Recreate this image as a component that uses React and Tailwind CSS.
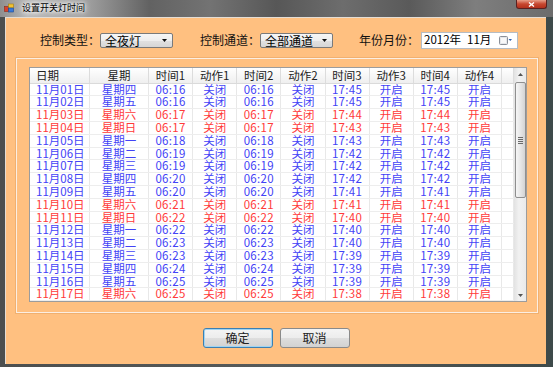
import React from "react";

const rows = [
  ["11月01日", "星期四", "06:16", "17:45", 0],
  ["11月02日", "星期五", "06:16", "17:45", 0],
  ["11月03日", "星期六", "06:17", "17:44", 1],
  ["11月04日", "星期日", "06:17", "17:43", 1],
  ["11月05日", "星期一", "06:18", "17:43", 0],
  ["11月06日", "星期二", "06:19", "17:42", 0],
  ["11月07日", "星期三", "06:19", "17:42", 0],
  ["11月08日", "星期四", "06:20", "17:42", 0],
  ["11月09日", "星期五", "06:20", "17:41", 0],
  ["11月10日", "星期六", "06:21", "17:41", 1],
  ["11月11日", "星期日", "06:22", "17:40", 1],
  ["11月12日", "星期一", "06:22", "17:40", 0],
  ["11月13日", "星期二", "06:23", "17:40", 0],
  ["11月14日", "星期三", "06:23", "17:39", 0],
  ["11月15日", "星期四", "06:24", "17:39", 0],
  ["11月16日", "星期五", "06:25", "17:39", 0],
  ["11月17日", "星期六", "06:25", "17:38", 1],
];

const headers = ["日期", "星期", "时间1", "动作1", "时间2", "动作2", "时间3", "动作3", "时间4", "动作4", ""];

function Combo({ text }) {
  return (
    <div className="w-[73px] h-[15px] rounded-[2px] border border-[#7a7a7a] bg-[linear-gradient(#f6f6f6,#eeeeee_50%,#e2e2e2_50%,#d6d6d6)] flex items-center pl-[4px] pr-[5px]">
      <span className="flex-1 text-[12px] leading-[13px] text-black">{text}</span>
      <svg width="5" height="3" viewBox="0 0 5 3">
        <path d="M0 0H5L2.5 3Z" fill="#111" />
      </svg>
    </div>
  );
}

function Btn({ children, def }) {
  return (
    <div
      className={
        "w-[70px] h-[20px] rounded-[3px] border flex items-center justify-center text-[12px] leading-none text-[#222] bg-[linear-gradient(#f4f4f4,#ececec_50%,#dedede_50%,#d2d2d2)] " +
        (def ? "border-[#3c7fb1] shadow-[inset_0_0_0_1px_#9fd4f2]" : "border-[#8a8a8a]")
      }
    >
      {children}
    </div>
  );
}

export default function App() {
  return (
    <div className="w-[553px] h-[367px] overflow-hidden bg-[linear-gradient(90deg,#4c4f4f,#575b5b_50%,#3e4a4a)] font-['Noto_Sans_CJK_SC','Noto_Sans',sans-serif] flex flex-col">
      {/* title bar */}
      <div className="h-[17px] flex items-start bg-[linear-gradient(90deg,#8e8e8e_0%,#b9b9b9_5%,#a4a4a4_15%,#626262_27%,#737373_38%,#575757_50%,#6d6d6d_62%,#5a5a5a_74%,#7e7e7e_86%,#6c6c6c_100%)]">
        <svg className="ml-[4px] mt-[3px]" width="10" height="10" viewBox="0 0 10 10">
          <rect x="0.5" y="3.5" width="4" height="5" fill="#d8412b" stroke="#8a2a1a" strokeWidth="0.6" />
          <rect x="4.5" y="1" width="5" height="4" fill="#f2c232" stroke="#a27d12" strokeWidth="0.6" />
          <rect x="4.5" y="5" width="5" height="4" fill="#3a78d8" stroke="#1c4a92" strokeWidth="0.6" />
        </svg>
        <span className="ml-[8px] mt-[2px] text-[9px] leading-[12px] text-black [text-shadow:0_0_3px_#fff,0_0_5px_#fff,0_0_7px_#fff]">
          设置开关灯时间
        </span>
        <div className="ml-auto mr-[6px] w-[31px] h-[9px] rounded-b-[3px] border border-t-0 border-[#5a2020] bg-[linear-gradient(#e8a08a,#c7462f_50%,#b3301c)] flex items-center justify-center">
          <svg width="7" height="5" viewBox="0 0 7 5">
            <path d="M1 0.5L6 4.5M6 0.5L1 4.5" stroke="#fff" strokeWidth="1.4" />
          </svg>
        </div>
      </div>

      {/* client */}
      <div className="flex-1 flex pl-[5px] pr-[7px] pb-[3px]">
        <div className="flex-1 bg-[#ffc080] border-l border-t border-[#e4ddd4] flex flex-col">
          {/* controls */}
          <div className="mt-[14px] h-[16px] flex items-center pl-[34px] text-[12px] text-[#111]">
            <span className="w-[60px] leading-none">控制类型：</span>
            <Combo text="全夜灯" />
            <span className="ml-[27px] w-[60px] leading-none">控制通道：</span>
            <Combo text="全部通道" />
            <span className="ml-[26px] w-[62px] leading-none">年份月份：</span>
            <div className="w-[97px] h-[17px] bg-white border border-[#b5bcc4] flex items-center pl-[2px] pr-[5px]">
              <span className="flex-1 whitespace-nowrap text-[11.5px] leading-none text-black">
                2012年<span className="ml-[6px]">11月</span>
              </span>
              <svg className="shrink-0" width="13" height="9" viewBox="0 0 13 9">
                <rect x="0.5" y="0.5" width="8" height="8" rx="1" fill="#e4e6ea" stroke="#8a8f98" />
                <rect x="2" y="2" width="5" height="5" fill="#f8f8f8" />
                <path d="M9.5 3H13L11.25 5Z" fill="#2d5fb0" />
              </svg>
            </div>
          </div>

          {/* group box */}
          <div className="mt-[10px] ml-[10px] w-[522px] h-[255px] border border-[#fbeee2] shadow-[0_0_0_1px_#f0b070]">
            <div className="ml-[12px] mt-[8px] w-[498px] h-[235px] border border-[#9c9c9c] bg-white flex overflow-hidden">
              <div className="w-[484px] flex flex-col">
                {/* header */}
                <div className="h-[15.6px] shrink-0 grid grid-cols-[60px_59px_repeat(8,1fr)_12px] bg-[linear-gradient(#ffffff,#f7f7f7_50%,#efefef)] border-b border-[#dadada]">
                  {headers.map((h, i) => (
                    <div
                      key={i}
                      className={
                        "border-r border-[#dcdcdc] text-[11.5px] leading-[14.6px] text-[#222] whitespace-nowrap " +
                        (i === 0 ? "pl-[6px]" : "text-center")
                      }
                    >
                      {h}
                    </div>
                  ))}
                </div>
                {rows.map((r, ri) => {
                  const c = r[4] ? "text-[#ff3a3a]" : "text-[#4343f6]";
                  const cells = [r[0], r[1], r[2], "关闭", r[2], "关闭", r[3], "开启", r[3], "开启", ""];
                  return (
                    <div
                      key={ri}
                      className={"h-[12.8px] shrink-0 grid grid-cols-[60px_59px_repeat(8,1fr)_12px] border-b border-[#ededed] " + c}
                    >
                      {cells.map((t, ci) => (
                        <div
                          key={ci}
                          className={
                            "border-r border-[#e8e8e8] text-[11.5px] leading-[11.8px] whitespace-nowrap " +
                            (ci === 0 ? "pl-[6px]" : "text-center") +
                            (ci === 2 || ci === 4 || ci === 6 || ci === 8 ? " tracking-[0.3px]" : "")
                          }
                        >
                          {t}
                        </div>
                      ))}
                    </div>
                  );
                })}
              </div>
              {/* scrollbar */}
              <div className="w-[12px] h-full bg-[linear-gradient(90deg,#e2e2e2,#f1f1f1_40%,#eaeaea)] flex flex-col items-center">
                <div className="h-[12px] w-full flex items-center justify-center">
                  <svg width="5" height="3" viewBox="0 0 5 3">
                    <path d="M0 3H5L2.5 0Z" fill="#555" />
                  </svg>
                </div>
                <div className="mt-[2px] h-[116px] w-[11px] rounded-[2px] border border-[#8f8f8f] bg-[linear-gradient(90deg,#f6f6f6,#e8e8e8_45%,#d3d3d3)] flex flex-col items-center justify-center gap-[1px]">
                  <div className="w-[5px] h-[1px] bg-[#6a6a6a]" />
                  <div className="w-[5px] h-[1px] bg-[#6a6a6a]" />
                  <div className="w-[5px] h-[1px] bg-[#6a6a6a]" />
                  <div className="w-[5px] h-[1px] bg-[#6a6a6a]" />
                </div>
                <div className="mt-auto h-[12px] w-full flex items-center justify-center">
                  <svg width="5" height="3" viewBox="0 0 5 3">
                    <path d="M0 0H5L2.5 3Z" fill="#555" />
                  </svg>
                </div>
              </div>
            </div>
          </div>

          {/* buttons */}
          <div className="mt-[15px] flex justify-center gap-[7px]">
            <Btn def>确定</Btn>
            <Btn>取消</Btn>
          </div>
        </div>
      </div>
    </div>
  );
}
